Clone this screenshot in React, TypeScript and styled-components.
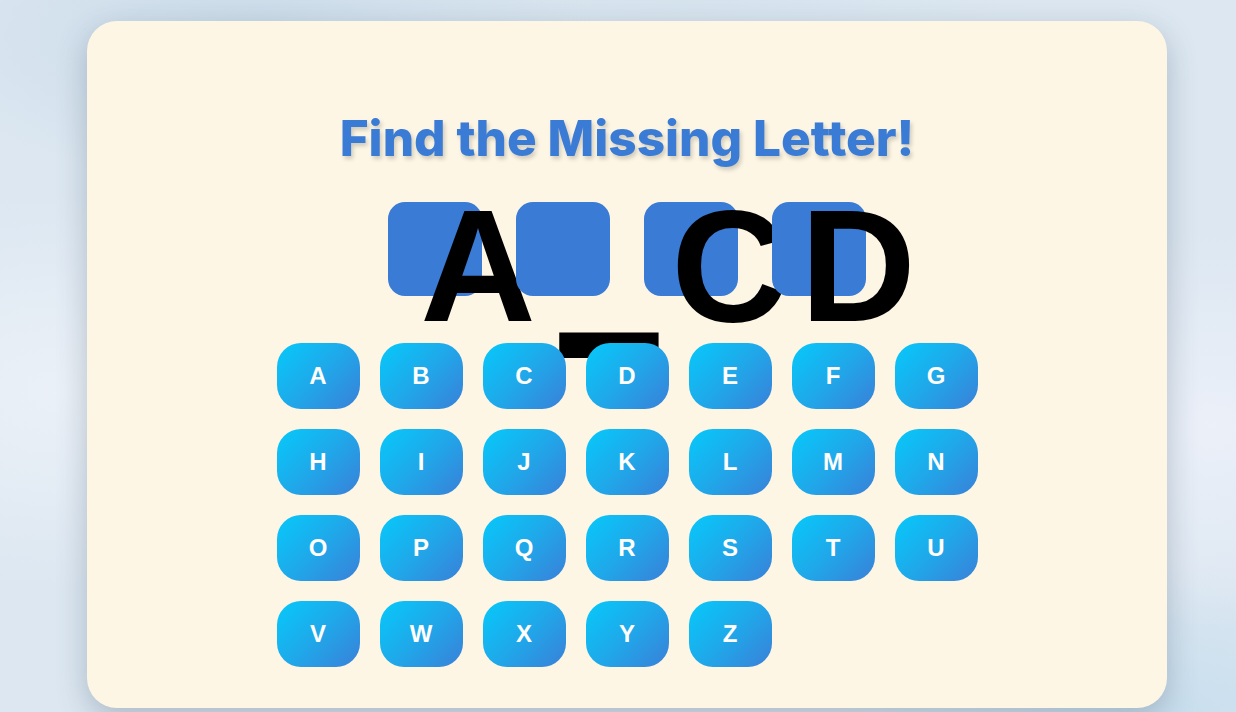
import React from "react";
import styled, { createGlobalStyle } from "styled-components";

const GlobalStyle = createGlobalStyle`
  html, body {
    margin: 0;
    padding: 0;
    height: 100%;
    overflow: hidden;
  }
  body {
    font-family: "Liberation Sans", Arial, sans-serif;
    background-color: #dce7f1;
    background-image:
      radial-gradient(ellipse 40% 30% at 20% 5%, rgba(200, 218, 232, 0.9), transparent 70%),
      radial-gradient(ellipse 40% 40% at 5% 55%, rgba(236, 241, 248, 0.95), transparent 70%),
      radial-gradient(ellipse 30% 40% at 98% 60%, rgba(236, 240, 249, 0.95), transparent 70%),
      radial-gradient(ellipse 40% 30% at 95% 100%, rgba(200, 222, 238, 0.95), transparent 70%),
      radial-gradient(ellipse 40% 20% at 55% 0%, rgba(214, 228, 238, 0.9), transparent 70%);
  }
`;

const Page = styled.div`
  min-height: 100vh;
  box-sizing: border-box;
  padding: 21px 0 0 87px;
`;

const Card = styled.main`
  width: 1080px;
  box-sizing: border-box;
  background: #fdf6e4;
  border-radius: 30px;
  box-shadow: 0 10px 30px rgba(60, 80, 100, 0.3);
  padding: 88px 0 41px;
  display: flex;
  flex-direction: column;
  align-items: center;
`;

const Title = styled.h1`
  margin: 0;
  font-family: Inter, "Open Sans", sans-serif;
  font-weight: 800;
  font-size: 49.5px;
  line-height: 58px;
  color: #3a7bd5;
  text-shadow: 2px 3px 4px rgba(0, 0, 0, 0.18);
`;

const SlotRow = styled.div`
  display: flex;
  gap: 34px;
  margin-top: 35px;
`;

const Slot = styled.div`
  position: relative;
  width: 94px;
  height: 94px;
  border-radius: 17px;
  background: #3a7bd5;
`;

const Glyph = styled.span<{ $shift: number }>`
  position: absolute;
  top: -16px;
  left: 50%;
  transform: translateX(calc(-50% + ${(p) => p.$shift}px));
  font-family: "Liberation Sans", Arial, sans-serif;
  font-weight: 700;
  font-size: 160px;
  line-height: 1;
  color: #000;
  white-space: nowrap;
  pointer-events: none;
`;

const BlankGlyph = styled(Glyph)`
  transform-origin: 50% 150px;
  transform: translate(calc(-50% + ${(p) => p.$shift}px), 3px) scale(1.08, 4.2);
`;

const Keyboard = styled.div`
  display: grid;
  grid-template-columns: repeat(7, 83px);
  grid-auto-rows: 66px;
  gap: 20px;
  margin-top: 47px;
`;

const Key = styled.button`
  position: relative;
  border: none;
  border-radius: 24px;
  background: linear-gradient(135deg, #06c9fa 0%, #1fa8ea 50%, #3a80d8 100%);
  color: #fff;
  font-family: "Liberation Sans", Arial, sans-serif;
  font-weight: 700;
  font-size: 24px;
  padding: 0;
  cursor: pointer;
`;

const word = [
  { ch: "A", shift: 43 },
  { ch: "_", shift: 46 },
  { ch: "C", shift: 38 },
  { ch: "D", shift: 39 },
];

const letters = "ABCDEFGHIJKLMNOPQRSTUVWXYZ".split("");

export default function App() {
  return (
    <>
      <GlobalStyle />
      <Page>
        <Card>
          <Title>Find the Missing Letter!</Title>
          <SlotRow>
            {word.map((w, i) => (
              <Slot key={i}>
                {w.ch === "_" ? (
                  <BlankGlyph $shift={w.shift}>{w.ch}</BlankGlyph>
                ) : (
                  <Glyph $shift={w.shift}>{w.ch}</Glyph>
                )}
              </Slot>
            ))}
          </SlotRow>
          <Keyboard>
            {letters.map((l) => (
              <Key key={l}>{l}</Key>
            ))}
          </Keyboard>
        </Card>
      </Page>
    </>
  );
}
